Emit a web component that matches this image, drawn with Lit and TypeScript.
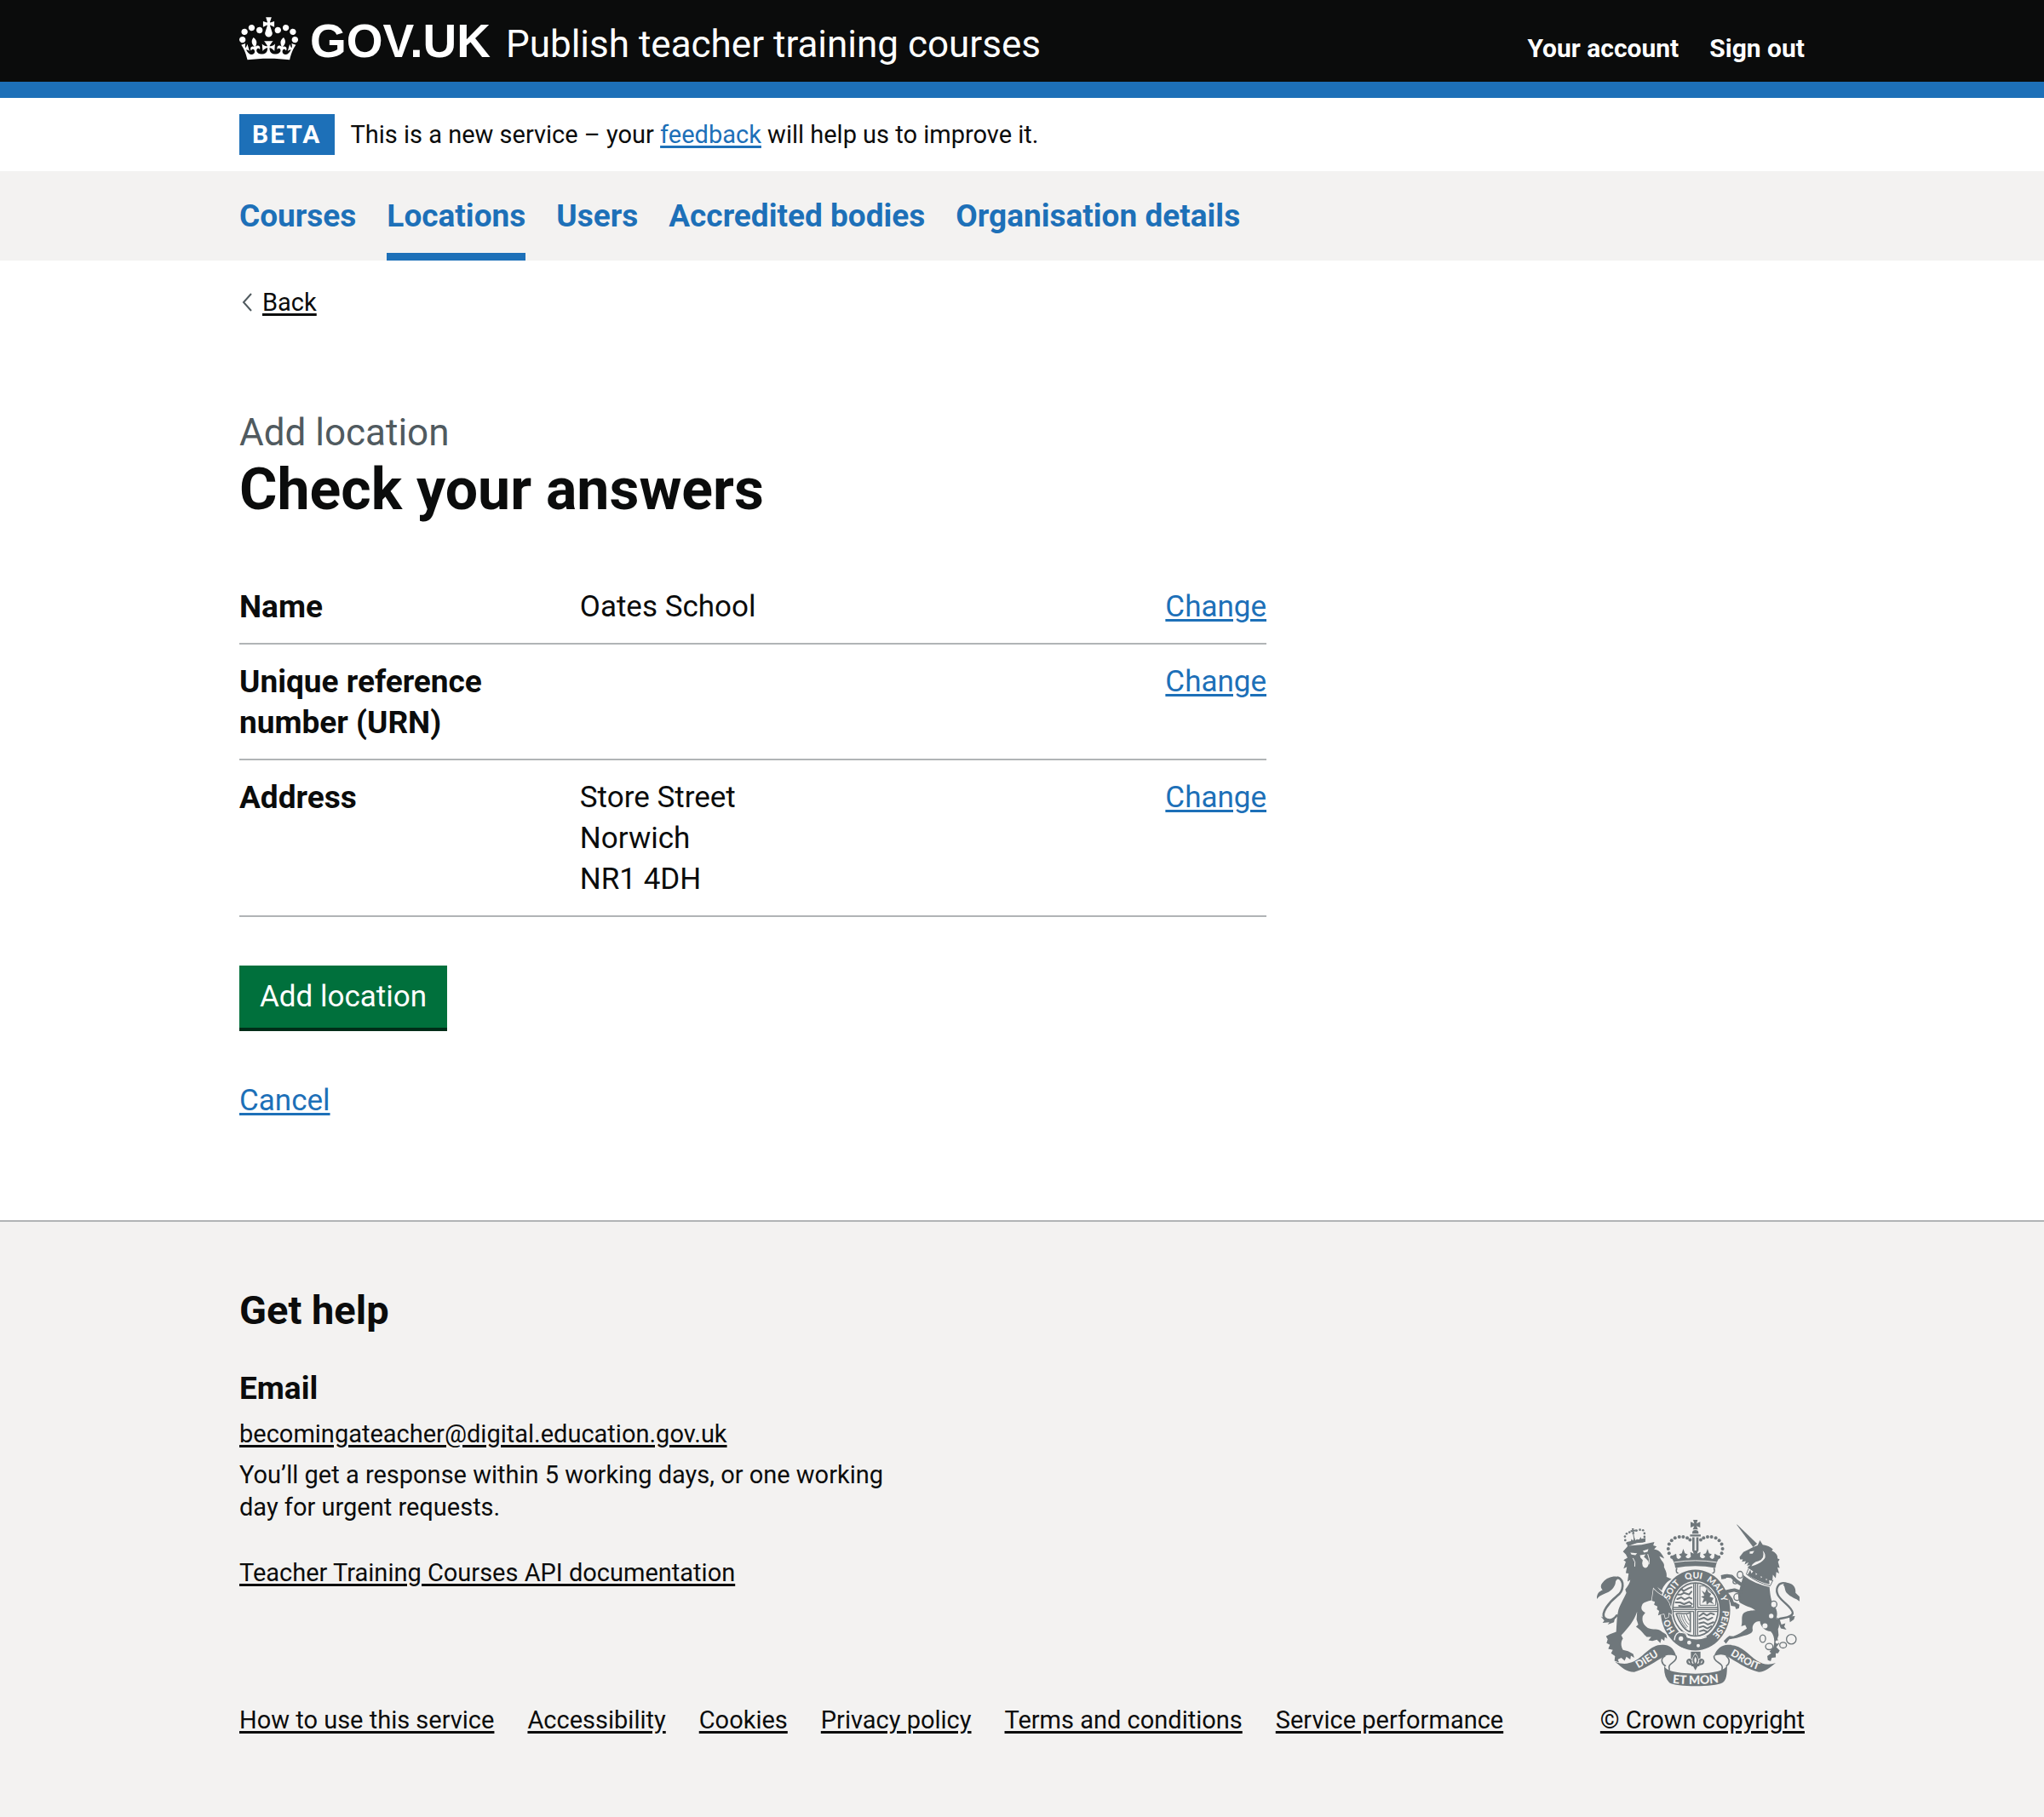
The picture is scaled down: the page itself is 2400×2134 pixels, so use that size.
import { LitElement, html, css, svg } from "lit";
import { customElement } from "lit/decorators.js";

const FONT = css`Roboto, "Liberation Sans", Arial, sans-serif`;

@customElement("gov-crown")
class GovCrown extends LitElement {
  static styles = css`
    :host { display: block; }
    svg { display: block; width: 69px; height: 51px; fill: currentColor; }
  `;

  render() {
    return html`<svg viewBox="0 0 132 97" aria-hidden="true">
      <path fill-rule="evenodd" d="M25 30.2c3.5 1.5 7.7-.2 9.1-3.7 1.5-3.6-.2-7.8-3.9-9.2-3.6-1.4-7.6.3-9.1 3.9-1.4 3.5.3 7.5 3.9 9zM9 39.5c3.6 1.5 7.8-.2 9.2-3.7 1.5-3.6-.2-7.8-3.9-9.1-3.6-1.5-7.6.2-9.1 3.8-1.4 3.5.3 7.5 3.8 9zM4.4 57.2c3.5 1.5 7.7-.2 9.1-3.8 1.5-3.6-.2-7.7-3.9-9.1-3.5-1.5-7.6.3-9.1 3.8-1.4 3.5.3 7.6 3.9 9.1zm38.3-21.4c3.5 1.5 7.7-.2 9.1-3.8 1.5-3.6-.2-7.7-3.9-9.1-3.6-1.5-7.6.3-9.1 3.8-1.3 3.6.4 7.7 3.9 9.1zm64.4-5.6c-3.6 1.5-7.8-.2-9.1-3.7-1.5-3.6.2-7.8 3.8-9.2 3.6-1.4 7.7.3 9.2 3.9 1.3 3.5-.4 7.5-3.9 9zm15.9 9.3c-3.6 1.5-7.7-.2-9.1-3.7-1.5-3.6.2-7.8 3.7-9.1 3.6-1.5 7.7.2 9.2 3.8 1.5 3.5-.3 7.5-3.8 9zm4.7 17.7c-3.6 1.5-7.8-.2-9.2-3.8-1.5-3.6.2-7.7 3.9-9.1 3.6-1.5 7.7.3 9.2 3.8 1.3 3.5-.4 7.6-3.9 9.1zM89.3 35.8c-3.6 1.5-7.8-.2-9.2-3.8-1.4-3.6.2-7.7 3.9-9.1 3.6-1.5 7.7.3 9.2 3.8 1.4 3.6-.3 7.7-3.9 9.1zM69.7 17.7l8.9 4.7V9.3l-8.9 2.8c-.2-.3-.5-.6-.9-.9L72.4 0H59.6l3.5 11.2c-.3.3-.6.5-.9.9l-8.8-2.8v13.1l8.8-4.7c.3.3.6.7.9.9l-5 15.4v.1c-.2.8-.4 1.6-.4 2.4 0 4.1 3.1 7.5 7 8.1h.2c.3 0 .7.1 1 .1.4 0 .7 0 1-.1h.2c4-.6 7.1-4.1 7.1-8.1 0-.8-.1-1.7-.4-2.4V34l-5.1-15.4c.4-.2.7-.6 1-.9zM66 92.8c16.9 0 32.8 1.1 47.1 3.2 4-16.9 8.9-26.7 14-33.5l-9.6-3.4c1 4.9 1.1 7.2 0 10.2-1.5-1.4-3-4.3-4.2-8.7L108.6 76c2.8-2 5-3.2 7.5-3.3-4.4 9.4-10 11.9-13.6 11.2-4.3-.8-6.3-4.6-5.6-7.9 1-4.7 5.7-5.9 8-.5 4.3-8.7-3-11.4-7.6-8.8 7.1-7.2 7.9-13.5 2.1-21.1-8 6.1-8.1 12.3-4.5 20.8-4.7-5.4-12.1-2.5-9.5 6.2 3.4-5.2 7.9-2 7.2 3.1-.6 4.3-6.4 7.8-13.5 7.2-10.3-.9-10.9-8-11.2-13.8 2.5-.5 7.1 1.8 11 7.3L80.2 60c-4.1 4.4-8 5.3-12.3 5.4 1.4-4.4 8-11.6 8-11.6H55.5s6.4 7.2 7.9 11.6c-4.2-.1-8-1-12.3-5.4l1.4 16.4c3.9-5.5 8.5-7.7 10.9-7.3-.3 5.8-.9 12.8-11.1 13.8-7.2.6-12.9-2.9-13.5-7.2-.7-5 3.8-8.3 7.1-3.1 2.7-8.7-4.6-11.6-9.4-6.2 3.7-8.5 3.6-14.7-4.6-20.8-5.8 7.6-5 13.9 2.2 21.1-4.7-2.6-11.9.1-7.7 8.8 2.3-5.5 7.1-4.2 8.1.5.7 3.3-1.3 7.1-5.7 7.9-3.5.7-9-1.8-13.5-11.2 2.5.1 4.7 1.3 7.5 3.3l-4.7-15.4c-1.2 4.4-2.7 7.2-4.3 8.7-1.1-3-.9-5.3 0-10.2l-9.5 3.4c5 6.9 9.9 16.7 14 33.5 14.8-2.1 30.8-3.2 47.7-3.2z"/>
    </svg>`;
  }
}

const dots = (points: number[][], r: number) => points.map(([x, y]) => svg`<circle cx=${x} cy=${y} r=${r}></circle>`);

const CROWN_PEARLS = [
  [369, 206], [359, 192], [356, 176], [359, 160], [368, 147], [380, 138], [395, 134], [409, 134], [423, 138], [433, 145],
];
const LION_PEARLS = [
  [211, 157], [204, 146], [203, 133], [209, 123], [219, 118], [244, 112], [256, 109], [267, 111], [272, 122], [272, 134], [270, 147],
];

// Words of the garter motto, placed by distance along the ring.
const MOTTO: [string, number][] = [["HO", 108], ["SOIT", 234], ["QUI", 321], ["MAL", 400], ["Y", 452], ["PENSE", 540]];

@customElement("royal-arms")
class RoyalArms extends LitElement {
  static styles = css`
    :host { display: block; color: #6f777b; }
    svg { display: block; width: 240px; height: 196px; fill: currentColor; }
    .line { fill: none; stroke: currentColor; stroke-linecap: round; stroke-linejoin: round; }
    .paper { fill: #f3f2f1; }
    .gap { fill: none; stroke: #f3f2f1; stroke-linecap: round; }
    .cut { stroke: #f3f2f1; stroke-width: 4px; paint-order: stroke; }
    text { font-family: Lato, ${FONT}; font-weight: 900; fill: #f3f2f1; }
  `;

  render() {
    return html`<svg viewBox="102 74 720 590" aria-hidden="true">
      <defs>
        <path id="ring" d="M452 505C399 505 356 455 356 393S399 281 452 281 548 331 548 393 505 505 452 505"></path>
        <path id="dieu" d="M236 606C272 590 300 566 336 546"></path>
        <path id="droit" d="M560 546C600 560 630 596 690 608"></path>
        <path id="mon" d="M370 651Q452 660 536 649"></path>
      </defs>

      <!-- Lion -->
      <g>
        <path d="M196 186L214 166 262 162 307 152 303 164 315 168 306 178C322 180 334 192 342 211L325 203C330 220 345 226 341 241 347 254 352 262 350 276L369 284C350 292 340 306 333 324L318 312C332 332 356 344 360 366L370 398 362 404 352 394 352 410 342 418 342 402 330 404 320 412 324 396 316 390 318 380 306 374 309 364 300 362 307 356C290 360 268 364 264 374 258 386 262 396 275 402L266 414C262 430 268 446 284 456 302 464 322 456 334 470L350 480 352 494 344 488 342 502 332 494 328 510 316 498 300 502 286 500 296 488 280 488C268 478 262 466 250 458L242 452 250 444 244 426 246 398C236 430 216 454 190 482L196 494C188 504 188 520 196 534L214 538 232 548 236 562 224 554 222 568 208 558 202 572 190 562 178 568 182 578 166 572 168 556 154 546 160 534 144 530 150 516 138 510 142 496 136 486 150 478 172 470C174 442 174 416 180 392 190 366 200 350 208 332L204 320C214 306 220 298 222 286L212 292 216 264 206 262 210 240 198 246 206 222 198 216 212 208 206 196Z"></path>
        <path class="paper" d="M222 190L246 192 240 199 226 197ZM266 184L286 177 283 187 271 190ZM256 199L276 196 270 205 278 212Q292 224 284 238 276 250 266 238 262 226 266 216L258 208Z"></path>
        <path class="gap" stroke-width="3" d="M284 196Q292 214 288 230M232 210Q242 222 238 238"></path>
        <path class="line" stroke-width="8" d="M174 412C160 432 142 432 130 420 118 404 146 366 174 344 200 326 202 288 178 278"></path>
        <path d="M186 278C168 270 140 276 126 294 114 306 118 316 124 322 112 326 102 336 104 354 112 342 124 338 138 332 158 324 170 306 170 292 174 284 180 280 186 284ZM118 416L128 420 142 424 156 430 168 420 164 436 142 444 148 436 124 438 130 430Z"></path>
        <path d="M212 168L210 152 276 138 275 152 244 156Z"></path>
        <path d="M222 156L226 142 232 148 236 136 240 148 246 142 252 150 258 134 264 148 270 144 268 154ZM227 104L235 104 233 110 241 108 241 116 234 114 237 124 228 124 230 116 223 118 223 110 229 111Z"></path>
        ${dots(LION_PEARLS, 4)}
        <path class="line" stroke-width="3" d="M232 122L236 142M220 160L268 148"></path>
      </g>

      <!-- Unicorn -->
      <g>
        <path d="M597 90L601 92 670 158 656 170Z"></path>
        <path d="M608 206L622 188 642 178 656 170 672 164 680 146 690 162C706 164 716 168 726 178L722 184C738 190 744 202 742 210L750 214 744 222 750 244 742 242 748 264 738 258 736 280 726 268 724 290C700 286 662 262 636 242L646 234 634 236 640 224 626 232 630 220 616 222 620 214 610 214Z"></path>
        <path class="paper" d="M644 186L660 184 654 194 644 194ZM690 182Q700 210 674 220 656 224 650 238L662 234Q684 228 696 212 704 198 690 182Z"></path>
        <path class="line" stroke-width="3" d="M640 246L632 266Q666 294 716 308L726 288"></path>
        <path d="M640 262L646 250 650 264 658 254 664 256 666 270 676 260 682 264 684 280 694 270 700 274 702 288 712 282 714 302Q670 292 636 268Z"></path>
        <path d="M622 270C646 292 686 306 714 312 716 340 720 360 728 376 740 388 744 404 738 422 746 434 752 446 744 460L746 482 742 494 748 512 738 524 750 536 744 546 736 546 736 560 722 562 718 574 708 570 706 556 720 546 714 540 728 524C734 500 730 480 718 468 700 468 682 452 680 432 664 432 652 444 654 460 658 474 640 480 622 484L598 492 572 496 560 512 552 502 564 490 572 484 586 486C604 480 618 470 634 458L628 446 614 450C620 436 612 416 622 404 632 396 652 394 664 394 650 382 628 380 608 366 600 346 604 330 608 320Z"></path>
        <path class="line" stroke-width="7" d="M744 440C728 412 790 430 796 404 796 376 734 356 740 318 744 298 760 294 776 300"></path>
        <path d="M770 296C796 296 808 312 806 332L820 346 820 362C808 352 788 348 776 334 766 322 770 308 762 304ZM744 434L738 418 750 426 756 444 770 440 766 452 774 462 754 458Z"></path>
        <path d="M784 416L804 414 800 426 786 436Z"></path>
        <g class="line" stroke-width="4">
          <ellipse cx="610" cy="268" rx="10" ry="12"></ellipse><ellipse cx="593" cy="293" rx="8" ry="7"></ellipse>
          <ellipse cx="599" cy="347" rx="11" ry="12"></ellipse>
          <ellipse class="paper" cx="729" cy="373" rx="11" ry="12"></ellipse>
          <ellipse cx="690" cy="494" rx="10" ry="13"></ellipse><ellipse cx="713" cy="522" rx="13" ry="11"></ellipse>
          <ellipse cx="762" cy="517" rx="12" ry="10"></ellipse><circle cx="791" cy="496" r="17"></circle>
        </g>
        <circle class="paper" cx="720" cy="414" r="8"></circle><circle class="paper" cx="698" cy="449" r="9"></circle>
        <circle class="paper" cx="741" cy="506" r="6"></circle>
      </g>

      <!-- Crown -->
      <g>
        <path d="M444 74H460L456 87 469 81V101L456 96 461 108H443L448 96 435 101V81L448 87ZM441 120A11 10 0 0 1 463 120V123H441ZM433 126H471V133H433ZM441 136H449V184H441ZM455 136H463V184H455Z"></path>
        ${dots(CROWN_PEARLS, 6)}
        ${dots(CROWN_PEARLS.map(([x, y]) => [904 - x, y]), 6)}
        <path d="M364 204L384 194 386 208Q394 218 402 204L394 196 404 192 409 176 415 192 425 196 417 204Q426 216 436 204L434 188 446 194 442 182H462L458 194 470 188 468 204Q478 216 487 204L479 196 489 192 495 176 500 192 510 196 502 204Q510 218 518 208L520 194 540 204Q526 220 523 244 452 230 381 244 378 220 364 204Z"></path>
        <path class="gap" stroke-width="3" d="M378 224Q452 212 526 224"></path>
        <path class="line" stroke-width="5" d="M386 246Q380 262 396 264M518 246Q524 262 508 264"></path>
      </g>

      <!-- Garter and shield -->
      <ellipse class="paper" cx="452" cy="393" rx="128" ry="147"></ellipse>
      <path fill-rule="evenodd" d="M452 250C520 250 575 314 575 393S520 536 452 536 329 472 329 393 384 250 452 250ZM452 290C405 290 366 336 366 393S405 496 452 496 538 450 538 393 499 290 452 290Z"></path>
      <ellipse class="line" cx="452" cy="391" rx="80" ry="94" stroke-width="5"></ellipse>
      <path class="line" stroke-width="4" d="M452 298V484M372 391H532M446 302V384H376M460 302V384H530M446 398H376M446 398V480M460 398H530M460 398V480"></path>
      <g class="line" stroke-width="6">
        <path d="M394 326L402 318 410 326 428 316 438 312M390 338H402L412 332 430 338 438 328M388 354L402 348 414 356 430 348 438 352M382 366L398 366 412 372 430 364 440 372M394 378L410 380 436 378"></path>
        <path d="M466 414L480 404 492 412 506 404 518 408M466 426L482 420 496 428 512 420M466 440L482 436 496 444 516 436M466 454L480 450 494 458 508 450M468 468L482 464 494 470"></path>
      </g>
      <path class="line" stroke-width="3" d="M468 308V376H524V352M468 308H484L524 346"></path>
      <path d="M474 324L486 332 492 316 498 330 508 336 502 346 516 350 510 362 518 372 502 366 492 374 490 360 476 368 482 352 472 346 484 342Z"></path>
      <path class="line" stroke-width="5" d="M384 406C396 400 410 412 434 402V470C420 468 398 446 384 406"></path>
      <path class="line" stroke-width="3" d="M394 410C400 432 408 444 420 456M402 410C406 428 414 440 424 452M411 411C414 426 420 436 429 444M421 409L430 430"></path>
      <path d="M384 490Q388 474 404 474 420 476 422 490 440 500 490 490L516 506Q450 548 396 520 382 512 384 490Z"></path>
      <path class="gap" stroke-width="4" d="M378 498Q380 470 404 470 426 474 424 488 456 502 490 488"></path>
      <circle class="paper" cx="401" cy="494" r="8"></circle><circle class="paper" cx="430" cy="508" r="7"></circle><circle class="paper" cx="462" cy="519" r="6"></circle>

      <!-- Lion forepaw and unicorn forelegs over the garter -->
      <path class="cut" d="M304 318Q322 338 344 346L358 366 364 384 370 398 368 410 358 402 356 418 346 422 342 406 330 408 320 412 324 396 316 390 318 380 306 374 309 364 298 360Z"></path>
      <g class="line" stroke-width="12">
        <path d="M620 306L596 290 580 274 564 272 550 276M614 330L590 322 560 328 552 336 566 342M562 334L578 356 584 372"></path>
      </g>
      <path d="M542 270L560 266 560 282 544 284ZM576 362L594 366 608 374 606 386 596 390 592 380 578 378ZM538 314L556 322 552 340 566 350 558 358 542 344Z"></path>
      ${MOTTO.map(([word, at]) => svg`<text font-size="31" text-anchor="middle"><textPath href="#ring" startOffset=${at}>${word}</textPath></text>`)}

      <!-- Lily below the shield -->
      <path d="M436 540H470V566H436Z"></path>
      <path class="cut" d="M452 548C440 562 440 572 446 582 440 584 438 578 440 570 434 560 420 564 420 576 422 586 430 588 438 588V592H444L452 606 460 592H466V588C474 588 482 586 484 576 484 564 470 560 464 570 466 578 464 584 458 582 464 572 464 562 452 548Z"></path>
      <path class="paper" d="M452 558Q444 570 452 582 460 570 452 558ZM428 570Q426 580 434 582 432 574 428 570ZM476 570Q478 580 470 582 472 574 476 570Z"></path>

      <!-- Scroll -->
      <path d="M168 576C196 586 214 584 236 574 272 556 292 516 334 516 354 514 376 524 384 556 368 550 352 550 344 556 310 574 276 602 236 612 206 612 196 598 168 576Z"></path>
      <path d="M736 580C706 590 692 584 670 572 636 550 618 516 570 516 548 514 526 530 518 556 536 548 550 548 562 556 600 576 636 604 676 612 700 612 712 598 736 580Z"></path>
      <path class="line" stroke-width="5" d="M384 556C390 580 350 578 360 604M344 556C326 566 334 584 346 590M518 556C514 580 556 578 546 604M562 556C578 570 570 586 562 590"></path>
      <path d="M342 588C344 606 376 616 452 618 526 616 556 606 564 588 564 620 562 640 548 650 520 666 384 666 360 650 346 634 340 614 342 588Z"></path>
      <g font-size="36" text-anchor="middle">
        <text><textPath href="#dieu" startOffset="50%">DIEU</textPath></text>
        <text><textPath href="#droit" startOffset="50%">DROIT</textPath></text>
        <text font-size="42"><textPath href="#mon" startOffset="50%">ET MON</textPath></text>
      </g>
    </svg>`;
  }
}

const NAV = ["Courses", "Locations", "Users", "Accredited bodies", "Organisation details"];
const ROWS = [
  { key: "Name", value: ["Oates School"] },
  { key: "Unique reference number (URN)", value: [] },
  { key: "Address", value: ["Store Street", "Norwich", "NR1 4DH"] },
];
const META = ["How to use this service", "Accessibility", "Cookies", "Privacy policy", "Terms and conditions", "Service performance"];

@customElement("app-root")
class AppRoot extends LitElement {
  static styles = css`
    :host {
      display: flex;
      flex-direction: column;
      min-height: 100vh;
      font-family: ${FONT};
      font-size: 29px;
      line-height: 38px;
      color: #0b0c0c;
      background: #fff;
    }
    * { box-sizing: border-box; }
    h1, h2, h3, p, dl, dd, dt, ul { margin: 0; padding: 0; }
    ul { list-style: none; }
    a { color: #1d70b8; text-decoration-thickness: 3px; text-underline-offset: 3px; }
    .wrap { width: calc(100% - 60px); max-width: 1838px; margin: 0 auto; }

    .header { background: #0b0c0c; border-bottom: 19px solid #1d70b8; }
    .header .wrap { display: flex; justify-content: space-between; align-items: baseline; height: 96px; padding-top: 20px; }
    .header a { color: #fff; text-decoration: none; }
    .brand { display: flex; align-items: baseline; }
    .logo { display: flex; gap: 14px; font: bold 55px/56px "Liberation Sans", Arial, sans-serif; }
    .logo span { align-self: baseline; }
    .service { margin-left: 18px; font-size: 44px; }
    .account { display: flex; gap: 36px; font-size: 30px; font-weight: 700; }

    .phase { display: flex; align-items: center; gap: 19px; padding: 19px 0; }
    .tag { padding: 5px 15px; background: #1d70b8; color: #fff; font-size: 30px; font-weight: 700; letter-spacing: 2px; }

    .tabs { background: #f3f2f1; }
    .tabs ul { display: flex; flex-wrap: wrap; gap: 36px; }
    .tabs a { display: block; padding: 29px 0 19px; border-bottom: 9px solid transparent; font-size: 37px; line-height: 48px; font-weight: 700; text-decoration: none; }
    .tabs a.current { border-color: #1d70b8; }

    .back { display: inline-flex; align-items: center; gap: 12px; margin: 30px 0 0 3px; color: #0b0c0c; text-decoration: none; }
    .back svg { width: 12px; height: 22px; fill: none; stroke: #505a5f; stroke-width: 2; }
    .back span { text-decoration: underline; text-decoration-thickness: 3px; text-underline-offset: 3px; }

    .main { flex: 1; padding: 103px 0 114px; font-size: 35px; line-height: 48px; }
    .caption { display: block; color: #505a5f; font-size: 44px; line-height: 60px; font-weight: 400; }
    h1 { font-size: 68px; line-height: 74px; }
    .summary { max-width: 1206px; margin: 57px 0; }
    .row { display: grid; grid-template-columns: 30% 1fr auto; column-gap: 38px; padding: 20px 0 18px; border-bottom: 2px solid #b1b4b6; }
    dt { font-size: 37px; font-weight: 700; }
    .line { display: block; }
    button { display: block; margin: 0 0 62px; padding: 18px 24px 17px; border: 0; background: #00703c; color: #fff; box-shadow: 0 4px 0 #002d18; font: 35px/38px ${FONT}; }

    .footer { padding: 75px 0 95px; background: #f3f2f1; border-top: 2px solid #b1b4b6; }
    .footer .wrap { display: flex; justify-content: space-between; align-items: flex-end; gap: 35px; }
    .footer a { color: #0b0c0c; }
    h2 { margin-bottom: 39px; font-size: 47px; line-height: 58px; }
    h3 { margin-bottom: 10px; font-size: 37px; line-height: 48px; }
    .help { max-width: 800px; margin-bottom: 135px; }
    .help p { margin-bottom: 10px; }
    .help .reply { margin-bottom: 39px; }
    .help .docs { margin-bottom: 0; }
    .meta { display: flex; flex-wrap: wrap; gap: 0 39px; }
    .copyright { display: flex; flex-direction: column; align-items: flex-end; gap: 20px; white-space: nowrap; }
    royal-arms { margin-right: 5px; }
  `;

  render() {
    return html`
      <header class="header">
        <div class="wrap">
          <div class="brand">
            <a class="logo" href="#"><gov-crown></gov-crown><span>GOV.UK</span></a>
            <a class="service" href="#">Publish teacher training courses</a>
          </div>
          <nav class="account" aria-label="Account"><a href="#">Your account</a><a href="#">Sign out</a></nav>
        </div>
      </header>
      <div class="wrap phase">
        <strong class="tag">BETA</strong>
        <span>This is a new service – your <a href="#">feedback</a> will help us to improve it.</span>
      </div>
      <nav class="tabs" aria-label="Organisation">
        <ul class="wrap">
          ${NAV.map((n) => html`<li><a href="#" class=${n === "Locations" ? "current" : ""}>${n}</a></li>`)}
        </ul>
      </nav>
      <div class="wrap">
        <a class="back" href="#">
          <svg viewBox="0 0 12 22" aria-hidden="true"><path d="M11 1L2 11l9 10"></path></svg><span>Back</span>
        </a>
      </div>
      <main class="wrap main">
        <h1><span class="caption">Add location</span>Check your answers</h1>
        <dl class="summary">
          ${ROWS.map((r) => html`<div class="row">
            <dt>${r.key}</dt>
            <dd>${r.value.map((v) => html`<span class="line">${v}</span>`)}</dd>
            <dd><a href="#" aria-label="Change ${r.key}">Change</a></dd>
          </div>`)}
        </dl>
        <button type="submit">Add location</button>
        <a href="#">Cancel</a>
      </main>
      <footer class="footer">
        <div class="wrap">
          <div>
            <div class="help">
              <h2>Get help</h2>
              <h3>Email</h3>
              <p><a href="mailto:becomingateacher@digital.education.gov.uk">becomingateacher@digital.education.gov.uk</a></p>
              <p class="reply">You’ll get a response within 5 working days, or one working day for urgent requests.</p>
              <p class="docs"><a href="#">Teacher Training Courses API documentation</a></p>
            </div>
            <ul class="meta">${META.map((m) => html`<li><a href="#">${m}</a></li>`)}</ul>
          </div>
          <div class="copyright"><royal-arms></royal-arms><a href="#">© Crown copyright</a></div>
        </div>
      </footer>`;
  }
}
